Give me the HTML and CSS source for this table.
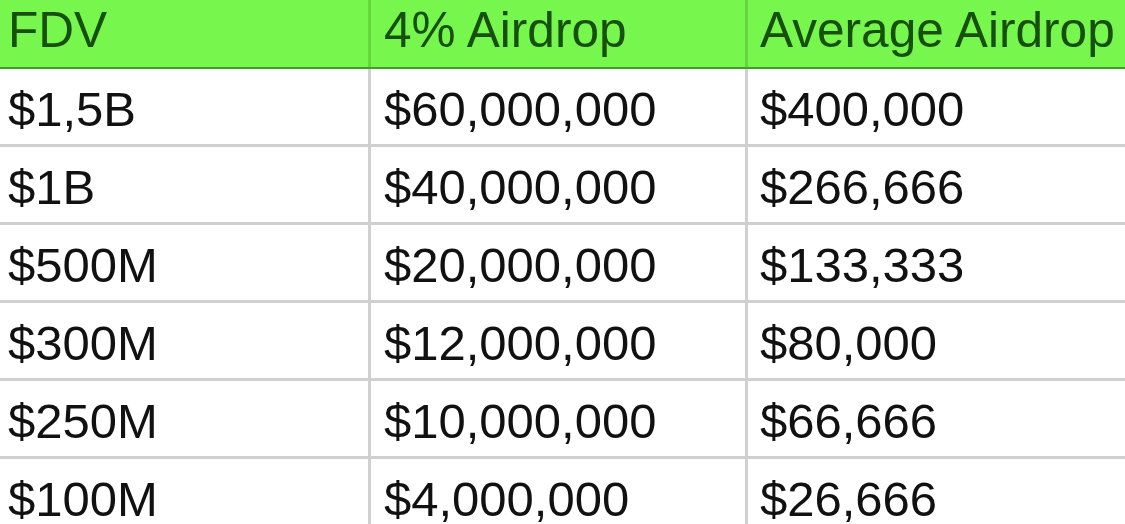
FILE: index.html
```html
<!DOCTYPE html>
<html lang="en">
<head>
<meta charset="utf-8">
<title>Airdrop table</title>
<link rel="stylesheet" href="styles.css">
</head>
<body>
<div class="sheet">
  <div class="row head">
    <div class="cell c1">FDV</div>
    <div class="cell c2">4% Airdrop</div>
    <div class="cell c3">Average Airdrop</div>
  </div>
  <div class="row">
    <div class="cell c1">$1,5B</div>
    <div class="cell c2">$60,000,000</div>
    <div class="cell c3">$400,000</div>
  </div>
  <div class="row">
    <div class="cell c1">$1B</div>
    <div class="cell c2">$40,000,000</div>
    <div class="cell c3">$266,666</div>
  </div>
  <div class="row">
    <div class="cell c1">$500M</div>
    <div class="cell c2">$20,000,000</div>
    <div class="cell c3">$133,333</div>
  </div>
  <div class="row">
    <div class="cell c1">$300M</div>
    <div class="cell c2">$12,000,000</div>
    <div class="cell c3">$80,000</div>
  </div>
  <div class="row">
    <div class="cell c1">$250M</div>
    <div class="cell c2">$10,000,000</div>
    <div class="cell c3">$66,666</div>
  </div>
  <div class="row last">
    <div class="cell c1">$100M</div>
    <div class="cell c2">$4,000,000</div>
    <div class="cell c3">$26,666</div>
  </div>
</div>
</body>
</html>
```
FILE: styles.css
```css
html, body {
  margin: 0;
  padding: 0;
  background: #ffffff;
  overflow: hidden;
}

.sheet {
  width: 1125px;
  height: 524px;
  overflow: hidden;
  font-family: "Liberation Sans", Arial, sans-serif;
  font-size: 49px;
  color: #111111;
}

.row {
  display: grid;
  grid-template-columns: 371px 377px 1fr;
  height: 78px;
  box-sizing: border-box;
  border-bottom: 3px solid #d0d0d0;
}

.row.last {
  border-bottom: none;
}

.cell {
  box-sizing: border-box;
  padding-top: 5px;
  line-height: 70px;
  white-space: nowrap;
  border-right: 3px solid #d0d0d0;
  padding-left: 13px;
}

.cell.c1 {
  padding-left: 8px;
}

.cell.c3 {
  border-right: none;
  padding-left: 12px;
}

.row.head {
  height: 69px;
  background: #77f64d;
  border-bottom: 2px solid #3f9e2c;
  color: #174f0f;
  font-size: 49.6px;
}

.row.head .cell {
  padding-top: 0;
  line-height: 61px;
  border-right-color: #62d83d;
}

.row.head .cell.c3 {
  border-right: none;
}
```
